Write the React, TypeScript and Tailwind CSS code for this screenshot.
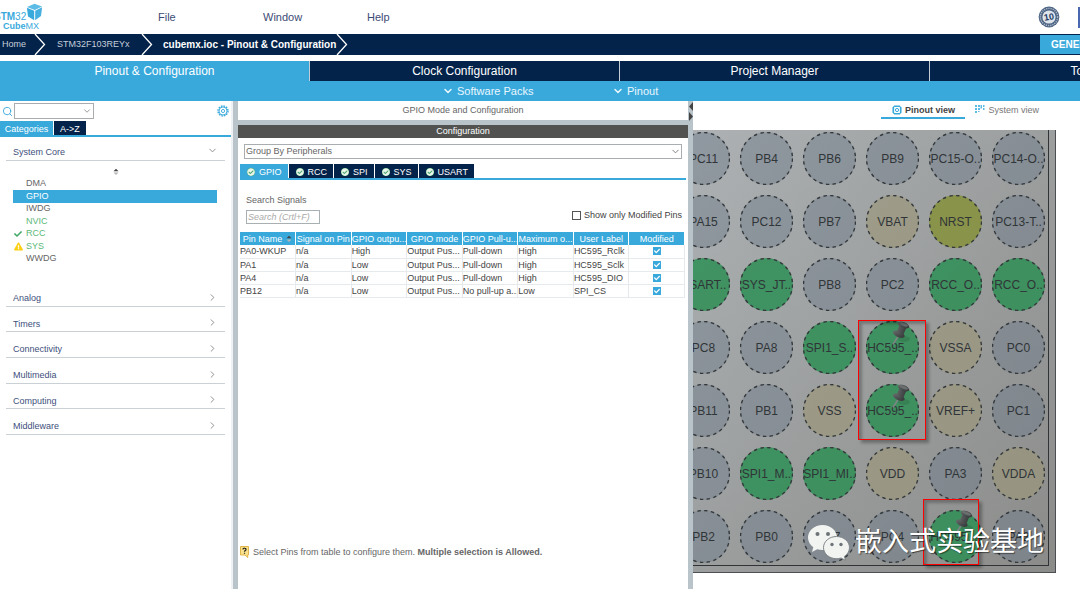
import type { ReactNode } from "react";
import { LuChevronDown, LuChevronRight, LuSearch } from "react-icons/lu";
import { FaCheck, FaCheckCircle, FaExclamationTriangle } from "react-icons/fa";

type PinKind = "free" | "power" | "reset" | "used";

interface Pin {
  name: string;
  kind: PinKind;
  pinned?: boolean;
}

const free = (name: string): Pin => ({ name, kind: "free" });
const power = (name: string): Pin => ({ name, kind: "power" });
const used = (name: string, pinned = false): Pin => ({
  name,
  kind: "used",
  pinned,
});

const pins: Pin[] = [
  free("PC11"), free("PB4"), free("PB6"), free("PB9"), free("PC15-O.."), free("PC14-O.."),
  free("PA15"), free("PC12"), free("PB7"), power("VBAT"), { name: "NRST", kind: "reset" }, free("PC13-T.."),
  used("USART.."), used("SYS_JT.."), free("PB8"), free("PC2"), used("RCC_O.."), used("RCC_O.."),
  free("PC8"), free("PA8"), used("SPI1_S.."), used("HC595_..", true), power("VSSA"), free("PC0"),
  free("PB11"), free("PB1"), power("VSS"), used("HC595_..", true), power("VREF+"), free("PC1"),
  free("PB10"), used("SPI1_M.."), used("SPI1_MI.."), power("VDD"), free("PA3"), power("VDDA"),
  free("PB2"), free("PB0"), free("PA7"), free("PC4"), used("HC595_..", true), free("PA2"),
];

const pinColors: Record<PinKind, string> = {
  free: "bg-[rgba(108,122,138,0.45)]",
  power: "bg-[rgba(155,151,122,0.65)]",
  reset: "bg-[#89934a]",
  used: "bg-[rgba(46,142,85,0.85)]",
};

const mainTabs = [
  "Pinout & Configuration",
  "Clock Configuration",
  "Project Manager",
  "Tools",
];

const coreItems = [
  { name: "DMA", style: "text-[#666]" },
  { name: "GPIO", style: "bg-[#39a9dc] text-white" },
  { name: "IWDG", style: "text-[#666]" },
  { name: "NVIC", style: "text-[#5cb878]" },
  { name: "RCC", style: "text-[#5cb878]", icon: "check" },
  { name: "SYS", style: "text-[#5cb878]", icon: "warning" },
  { name: "WWDG", style: "text-[#666]" },
];

const categories = [
  "Analog",
  "Timers",
  "Connectivity",
  "Multimedia",
  "Computing",
  "Middleware",
];

const columns = [
  "Pin Name",
  "Signal on Pin",
  "GPIO outpu...",
  "GPIO mode",
  "GPIO Pull-u...",
  "Maximum o...",
  "User Label",
  "Modified",
];

const rows = [
  ["PA0-WKUP", "n/a", "High", "Output Pus...", "Pull-down", "High", "HC595_Rclk"],
  ["PA1", "n/a", "Low", "Output Pus...", "Pull-down", "High", "HC595_Sclk"],
  ["PA4", "n/a", "Low", "Output Pus...", "Pull-down", "High", "HC595_DIO"],
  ["PB12", "n/a", "Low", "Output Pus...", "No pull-up a...", "Low", "SPI_CS"],
];

function Logo() {
  return (
    <div className="relative h-[34px] w-[50px] overflow-hidden">
      <svg className="absolute left-[26px] top-[3px]" width="17" height="18" viewBox="0 0 17 18" aria-hidden="true">
        <path d="M8.500 0.800 16 3.400 8.800 7 1 4Z" fill="#5cbce6" />
        <path d="M0.900 4.700 8.200 7.700V17.200L2 13.400Z" fill="#39a9dc" />
        <path d="M9.200 7.700 16.100 4.200 15 13 9.200 17.200Z" fill="#45afe0" />
      </svg>
      <span className="absolute -left-[6px] top-[11px] text-[10px] leading-3 text-[#39a9dc]">
        <b>STM</b>32
      </span>
      <span className="absolute left-[3px] top-[20px] text-[9px] leading-3 text-[#39a9dc]">
        <b>Cube</b>MX
      </span>
    </div>
  );
}

function AnniversaryBadge() {
  return (
    <svg width="22" height="22" viewBox="0 0 22 22" aria-label="10 years">
      <circle cx="11" cy="11" r="10.400" fill="#4d6484" />
      <circle cx="11" cy="11" r="8.600" fill="none" stroke="#aeb9c8" strokeWidth="1.400" strokeDasharray="1.200 1" />
      <circle cx="11" cy="11" r="6.600" fill="#dfe4ea" />
      <text x="11" y="14" textAnchor="middle" fontSize="9" fontWeight="bold" fill="#1d3a63" transform="rotate(-10 11 11)">
        10
      </text>
    </svg>
  );
}

function SortArrows({ className }: { className?: string }) {
  return (
    <svg className={className} width="6" height="8" viewBox="0 0 6 8" aria-hidden="true">
      <path d="M0.5 3.2 3 0.8 5.5 3.2Z" fill="#444" />
      <path d="M0.5 4.6 3 7 5.5 4.6Z" fill="#b5b5b5" />
    </svg>
  );
}

function Gear() {
  return (
    <svg width="12" height="12" viewBox="0 0 12 12" fill="none" stroke="#39a9dc" aria-hidden="true">
      <circle cx="6" cy="6" r="5" strokeWidth="1.4" strokeDasharray="1.6 1" />
      <circle cx="6" cy="6" r="4" strokeWidth="0.9" />
      <circle cx="6" cy="6" r="1.6" strokeWidth="0.9" />
    </svg>
  );
}

function Thumbtack() {
  return (
    <svg className="absolute left-[26px] top-0" width="20" height="24" viewBox="0 0 20 24" aria-hidden="true">
      <defs>
        <linearGradient id="tack" x1="0" y1="0" x2="1" y2="0.3">
          <stop offset="0" stopColor="#6f7373" />
          <stop offset="0.4" stopColor="#545858" />
          <stop offset="1" stopColor="#3a3d3d" />
        </linearGradient>
      </defs>
      <ellipse cx="12" cy="18" rx="6" ry="3" fill="#000" opacity="0.1" />
      <path d="M6 15.500 1 23.500" stroke="#7f8484" strokeWidth="1.500" />
      <ellipse cx="6.800" cy="13.200" rx="6.200" ry="3" fill="url(#tack)" transform="rotate(24 6.800 13.200)" />
      <path d="M7.500 4 14.500 6.600 11.200 14C8.600 14.400 5.400 13 4.400 11.400Z" fill="url(#tack)" />
      <ellipse cx="11.400" cy="4" rx="6" ry="2.900" fill="url(#tack)" transform="rotate(22 11.400 4)" />
      <ellipse cx="11.600" cy="3.300" rx="4.600" ry="1.500" fill="#6a6e6e" transform="rotate(22 11.600 3.300)" />
    </svg>
  );
}

function Crumb({ children }: { children: ReactNode }) {
  return (
    <div className="flex h-full items-center">
      {children}
      <svg width="12" height="21" viewBox="0 0 12 21" fill="none" stroke="white" strokeWidth="1.3" aria-hidden="true">
        <path d="M1 0 10.5 10.5 1 21" />
      </svg>
    </div>
  );
}

function Header() {
  return (
    <header>
      <div className="flex h-[34px] items-center overflow-hidden text-[11px] text-[#3c4b75]">
        <Logo />
        <nav className="flex flex-1">
          <a href="#file" className="ml-[108px] w-[105px]">File</a>
          <a href="#window" className="w-[104px]">Window</a>
          <a href="#help">Help</a>
        </nav>
        <AnniversaryBadge />
        <div className="ml-[18px] h-[21px] w-[2px] bg-[#4a68b0]" />
      </div>

      <div className="flex h-[21px] items-center overflow-hidden bg-[#03234b] text-[9px] text-[#c5ceda]">
        <Crumb><a href="#home" className="w-[34px] pl-[2px]">Home</a></Crumb>
        <Crumb><a href="#mcu" className="w-[95px] pl-[11px]">STM32F103REYx</a></Crumb>
        <Crumb>
          <span className="w-[183px] whitespace-nowrap pl-[10px] text-[10px] font-bold text-white">
            cubemx.ioc - Pinout &amp; Configuration
          </span>
        </Crumb>
        <button className="ml-auto h-[19px] w-10 overflow-hidden whitespace-nowrap bg-[#39a9dc] pl-[11px] text-left text-[10px] font-bold text-white">
          GENERATE CODE
        </button>
      </div>

      <div className="mt-[6px] flex h-5 overflow-hidden bg-[#03234b] text-[12px] text-white">
        {mainTabs.map((tab, i) => (
          <button
            key={tab}
            className={`w-[310px] shrink-0 border-r border-[#c4ccd6] ${i === 0 ? "bg-[#39a9dc]" : ""}`}
          >
            {tab}
          </button>
        ))}
      </div>

      <div className="flex h-5 items-center bg-[#39a9dc] text-[11px] text-[#eaf6fc]">
        <button className="ml-[442px] flex w-[170px] items-center gap-[3px]">
          <LuChevronDown size={12} strokeWidth={3} />
          Software Packs
        </button>
        <button className="flex items-center gap-[3px]">
          <LuChevronDown size={12} strokeWidth={3} />
          Pinout
        </button>
      </div>
    </header>
  );
}

function Sidebar() {
  return (
    <aside className="w-[233px] shrink-0 border-r-2 border-[#eef2f4] text-[9px]">
      <div className="flex h-5 items-center">
        <LuSearch className="ml-[2px] text-[#39a9dc]" size={11} strokeWidth={2} />
        <div className="relative ml-px">
          <select aria-label="Search peripheral" className="block h-4 w-20 appearance-none border border-[#a9adb0]" />
          <LuChevronDown className="pointer-events-none absolute right-[2px] top-[3px] text-[#888]" size={10} />
        </div>
        <button className="ml-auto mr-[2px]" aria-label="Settings"><Gear /></button>
      </div>

      <div className="flex h-4 items-stretch border-b-2 border-[#39a9dc] leading-3">
        <button className="w-[53px] bg-[#39a9dc] pt-px text-white">Categories</button>
        <button className="ml-px w-8 bg-[#03234b] pt-px text-white">A-&gt;Z</button>
      </div>

      <div className="pl-[6px] pr-[6px] text-[#414f7c]">
        <button className="flex h-6 w-full items-end justify-between border-b border-[#c9d1d6] px-[7px] pb-px">
          System Core
          <LuChevronDown className="mb-[3px] text-[#888]" size={11} />
        </button>
        <SortArrows className="mx-auto mt-[7px]" />
        <ul className="mr-[8px] ml-[7px] mt-[2px] grid h-[87px] grid-rows-7">
          {coreItems.map((item) => (
            <li key={item.name} className={`flex items-center ${item.style}`}>
              <span className="w-[13px]">
                {item.icon === "check" && <FaCheck className="ml-px text-[#3fa866]" size={8} />}
                {item.icon === "warning" && <FaExclamationTriangle className="ml-px text-[#fccf12]" size={9} />}
              </span>
              {item.name}
            </li>
          ))}
        </ul>
        <div className="mt-4 grid h-[154px] grid-rows-6">
          {categories.map((name) => (
            <button key={name} className="flex items-end justify-between border-b border-[#c9d1d6] px-[7px]">
              {name}
              <LuChevronRight className="mb-[3px] text-[#888]" size={11} />
            </button>
          ))}
        </div>
      </div>
    </aside>
  );
}

function ModifiedBox({ label }: { label: string }) {
  return (
    <span className="relative mx-auto block size-2">
      <input type="checkbox" defaultChecked aria-label={label} className="block size-2 appearance-none bg-[#39a9dc]" />
      <FaCheck className="pointer-events-none absolute left-px top-px text-white" size={6} />
    </span>
  );
}

function ConfigPanel() {
  return (
    <main className="flex w-[455px] shrink-0 flex-col border-l-[5px] border-[#b9c4ca] text-[9px] text-[#444]">
      <h1 className="flex h-[19px] items-center justify-center text-[#666]">GPIO Mode and Configuration</h1>
      <div className="h-[5px] bg-[#b9c4ca]" />
      <h2 className="flex h-[13px] items-center justify-center bg-[#525351] text-white">Configuration</h2>

      <div className="relative mx-[6px] mt-[6px]">
        <select
          aria-label="Grouping"
          className="block h-[15px] w-full appearance-none border border-[#a9adb0] pl-px leading-none text-[#666]"
        >
          <option>Group By Peripherals</option>
        </select>
        <LuChevronDown className="pointer-events-none absolute right-px top-[2px] text-[#777]" size={11} />
      </div>

      <div className="ml-[2px] mr-[2px] mt-[5px] flex h-4 gap-px border-b-2 border-[#39a9dc] leading-3 text-white">
        {["GPIO", "RCC", "SPI", "SYS", "USART"].map((tab, i) => (
          <button
            key={tab}
            className={`flex items-center gap-1 pl-[7px] pr-[6px] pt-px ${i === 0 ? "bg-[#39a9dc]" : "bg-[#03234b]"}`}
          >
            <FaCheckCircle className="rounded-full bg-[#4ba86c] text-[#e9f5ea]" size={8} />
            {tab}
          </button>
        ))}
      </div>

      <div className="mt-[14px] flex items-end justify-between pl-2 pr-[6px]">
        <label className="flex flex-col gap-1 leading-3 text-[#666]">
          Search Signals
          <input
            placeholder="Search (Crtl+F)"
            className="h-[14px] w-[74px] border border-[#a9b0b4] px-px italic placeholder:text-[#aaa]"
          />
        </label>
        <label className="flex items-center gap-[3px] pb-[3px] leading-3">
          <input type="checkbox" className="size-[9px] appearance-none border border-[#555]" />
          Show only Modified Pins
        </label>
      </div>

      <div className="ml-[2px] mr-[3px] mt-[8px]">
        <table className="w-full table-fixed border-collapse">
          <thead>
            <tr className="h-[13px] bg-[#39a9dc] leading-3 text-white">
              {columns.map((col, i) => (
                <th key={col} className="overflow-hidden whitespace-nowrap border-r border-white p-0 font-normal">
                  {col}
                  {i === 0 && <SortArrows className="ml-1 inline-block" />}
                </th>
              ))}
            </tr>
          </thead>
          <tbody>
            {rows.map((row) => (
              <tr key={row[0]} className="h-[13px] leading-3">
                {row.map((cell, i) => (
                  <td key={i} className="overflow-hidden whitespace-nowrap border-b border-r border-[#e6eaed] p-0">
                    {cell}
                  </td>
                ))}
                <td className="border-b border-r border-[#e6eaed] p-0">
                  <ModifiedBox label={`${row[0]} modified`} />
                </td>
              </tr>
            ))}
          </tbody>
        </table>
      </div>

      <p className="mb-[30px] mt-auto flex items-center gap-1 pl-[2px] text-[#666]">
        <svg width="9" height="12" viewBox="0 0 9 12" aria-hidden="true">
          <path d="M0.5 0.5H8.5V9H7.5L7.8 11.5 5 9H0.5Z" fill="#fbe28a" stroke="#e0b64a" />
          <path d="M3 3.4C3 1.8 6.2 1.8 6 3.6 5.9 4.6 4.5 4.6 4.5 5.8M4.5 6.8V7.8" stroke="#222" strokeWidth="1.2" fill="none" />
        </svg>
        <span>Select Pins from table to configure them. <b>Multiple selection is Allowed.</b></span>
      </p>
    </main>
  );
}

function Watermark() {
  return (
    <div className="absolute bottom-[11px] right-[11px] flex items-center gap-[5px] whitespace-nowrap text-[27px] leading-[38px] text-white [text-shadow:1px_1px_1px_rgba(0,0,0,0.5)]">
      <svg width="43" height="37" viewBox="0 0 43 37" aria-hidden="true">
        <path d="M15.5 1C7.3 1 1 6.6 1 13.6c0 4 2 7.300 5.300 9.600L5 28l5.200-2.800c1.700.5 3.500.8 5.300.8 8.200 0 14.500-5.500 14.500-12.400S23.700 1 15.500 1Z" fill="#f2f4f2" />
        <circle cx="10.500" cy="10" r="2" fill="#6d7377" />
        <circle cx="21" cy="10" r="2" fill="#6d7377" />
        <path d="M29.500 12.500c-7.200 0-13 4.900-13 11.100s5.800 11.100 13 11.100c1.600 0 3.100-.2 4.500-.7l4.600 2.400-1.200-4c3-2 5.100-5.200 5.100-8.800 0-6.200-5.800-11.100-13-11.100Z" fill="#f2f4f2" stroke="#7e8487" />
        <circle cx="25" cy="20.500" r="1.700" fill="#6d7377" />
        <circle cx="34" cy="20.500" r="1.700" fill="#6d7377" />
      </svg>
      嵌入式实验基地
    </div>
  );
}

function PinoutPanel() {
  return (
    <section className="min-w-0 flex-1 border-l-[5px] border-[#b9c4ca]">
      <div className="relative flex h-[29px] items-start justify-end pr-[41px] text-[9px] text-[#777]">
        <svg className="absolute -left-[4px] top-0" width="4" height="20" viewBox="0 0 4 20" aria-hidden="true">
          <path d="M4 1V10L0 5.500ZM0 11V20L4 15.500Z" fill="#444" />
        </svg>
        <button className="mr-[10px] flex h-[18px] w-[84px] items-center justify-center gap-[3px] border-b-2 border-[#39a9dc] pt-[2px] font-bold leading-3 text-[#444]">
          <svg width="10" height="10" viewBox="0 0 10 10" fill="none" stroke="#39a9dc" aria-hidden="true">
            <rect x="1.500" y="1.500" width="7" height="7" rx="1" strokeWidth="1.200" />
            <circle cx="5" cy="5" r="1.600" />
            <path d="M0 3H1M0 5H1M0 7H1M9 3H10M9 5H10M9 7H10M3 0V1M5 0V1M7 0V1M3 9V10M5 9V10M7 9V10" />
          </svg>
          Pinout view
        </button>
        <button className="flex h-[18px] items-center gap-[3px] leading-3">
          <svg width="10" height="10" viewBox="0 0 10 10" fill="#5fbae4" aria-hidden="true">
            <path d="M0 0H2V2H0ZM3 0H5V2H3ZM5.500 0H7V2H5.500ZM8 0H9.500V2H8ZM0 3H2V5H0ZM3 3H5V5H3ZM5.500 2H7V3.500H5.500ZM8 3H9.500V5H8ZM0 6H2V8H0ZM3 6H4.500V7H3Z" />
          </svg>
          System view
        </button>
      </div>

      <div className="relative mr-6 overflow-hidden border-b border-r border-[#4c5052] bg-linear-to-br from-[#adb1b3] to-[#8b8c8a] pb-[6px] pr-[6px]">
        <div className="flex justify-end border-b border-r border-[#303436] pb-[2px] pr-[3px] pt-[2px]">
          <div className="grid grid-cols-[repeat(6,53px)] gap-[10px]">
            {pins.map((pin, i) => (
              <div
                key={i}
                className={`relative flex size-[53px] items-center justify-center whitespace-nowrap rounded-full text-[12px] text-[#303538] ${pinColors[pin.kind]}`}
              >
                <svg className="absolute inset-0 size-full" viewBox="0 0 53 53" aria-hidden="true">
                  <circle cx="26.500" cy="26.500" r="26" fill="none" stroke="#34393c" strokeWidth="1.400" strokeDasharray="3.400 3.400" />
                </svg>
                {pin.name}
                {pin.pinned && <Thumbtack />}
              </div>
            ))}
          </div>
        </div>
        <div className="absolute right-[129px] top-[190px] h-[120px] w-[68px] border border-[#ff0000] shadow-[3px_3px_3px_rgba(0,0,0,0.3),inset_3px_3px_3px_rgba(0,0,0,0.25)]" />
        <div className="absolute right-[76px] top-[369px] h-[66px] w-[56px] border border-[#ff0000] shadow-[3px_3px_3px_rgba(0,0,0,0.3),inset_3px_3px_3px_rgba(0,0,0,0.25)]" />
        <Watermark />
      </div>
    </section>
  );
}

export default function App() {
  return (
    <div className="flex h-screen flex-col overflow-hidden bg-white font-['Liberation_Sans','Noto_Sans_CJK_SC',sans-serif]">
      <Header />
      <div className="flex min-h-0 flex-1">
        <Sidebar />
        <ConfigPanel />
        <PinoutPanel />
      </div>
    </div>
  );
}
